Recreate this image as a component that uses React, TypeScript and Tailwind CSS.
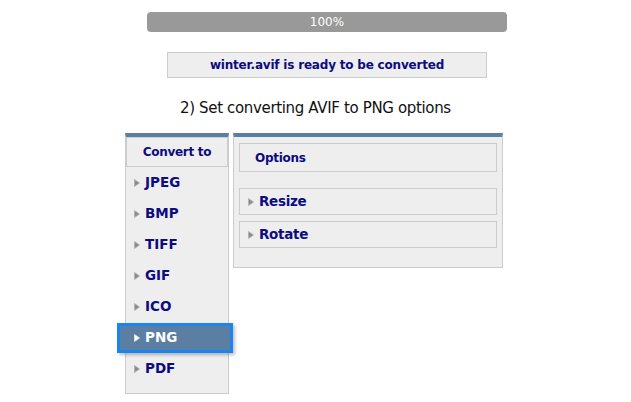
import React from "react";

const Tri = ({ color = "#8a8a8a" }: { color?: string }) => (
  <svg width="6" height="8" viewBox="0 0 6 8" className="shrink-0">
    <path d="M0.5 0.5 L5.5 4 L0.5 7.5 Z" fill={color} stroke={color === "#8a8a8a" ? "#b0b0b0" : "#e8e8e8"} strokeWidth="0.8" />
  </svg>
);

const formats = ["JPEG", "BMP", "TIFF", "GIF", "ICO", "PNG", "PDF"];

export default function App() {
  return (
    <div className="w-[631px] h-[402px] bg-white overflow-hidden" style={{ fontFamily: '"DejaVu Sans", Verdana, sans-serif' }}>
      <div className="pt-[12px]">
        <div className="ml-[147px] w-[360px] h-[20px] rounded-[4px] bg-[#999999] flex items-center justify-center text-white text-[12px]">
          100%
        </div>
        <div className="ml-[167px] mt-[20px] w-[320px] h-[26px] bg-[#eeeeee] border border-[#cccccc] flex items-center justify-center text-[12px] font-bold text-[#0c0c80] tracking-[-0.2px]">
          winter.avif is ready to be converted
        </div>
        <div className="mt-[18px] h-[24px] flex items-center ml-[180px] text-[15px] text-[#111] tracking-[-0.35px]">
          2) Set converting AVIF to PNG options
        </div>
        <div className="mt-[13px] flex items-start">
          <div className="ml-[125px] w-[104px] h-[261px] bg-[#eeeeee] border border-[#cccccc] border-t-[4px] border-t-[#5b7fa3]">
            <div className="h-[30px] border border-[#cccccc] flex items-center justify-center text-[12px] font-bold text-[#0c0c80] tracking-[-0.3px]">
              Convert to
            </div>
            <div className="flex flex-col">
              {formats.map((f) =>
                f === "PNG" ? (
                  <div key={f} className="h-[31px] flex items-center">
                    <div className="ml-[-9px] mr-[-5px] h-[30px] flex-1 border-[3px] border-[#1a84f2] bg-[#5b7fa3] shadow-[2px_2px_3px_rgba(0,0,0,0.25)] flex items-center gap-[5px] pl-[14px] text-[13.5px] font-bold text-white">
                      <Tri color="#ffffff" />
                      <span>{f}</span>
                    </div>
                  </div>
                ) : (
                  <div key={f} className="h-[31px] flex items-center gap-[5px] pl-[8px] text-[13.5px] font-bold text-[#0c0c80]">
                    <Tri />
                    <span>{f}</span>
                  </div>
                )
              )}
            </div>
          </div>
          <div className="ml-[4px] w-[270px] h-[135px] bg-[#eeeeee] border border-[#cccccc] border-t-[4px] border-t-[#5b7fa3] px-[5px] pt-[6px]">
            <div className="h-[29px] border border-[#cccccc] flex items-center pl-[15px] text-[12px] font-bold text-[#0c0c80] tracking-[-0.3px]">
              Options
            </div>
            <div className="mt-[16px] flex flex-col gap-[6px]">
              {["Resize", "Rotate"].map((t) => (
                <div key={t} className="h-[27px] border border-[#cccccc] flex items-center gap-[5px] pl-[8px] text-[13.5px] font-bold text-[#0c0c80] tracking-[-0.3px]">
                  <Tri />
                  <span>{t}</span>
                </div>
              ))}
            </div>
          </div>
        </div>
      </div>
    </div>
  );
}
